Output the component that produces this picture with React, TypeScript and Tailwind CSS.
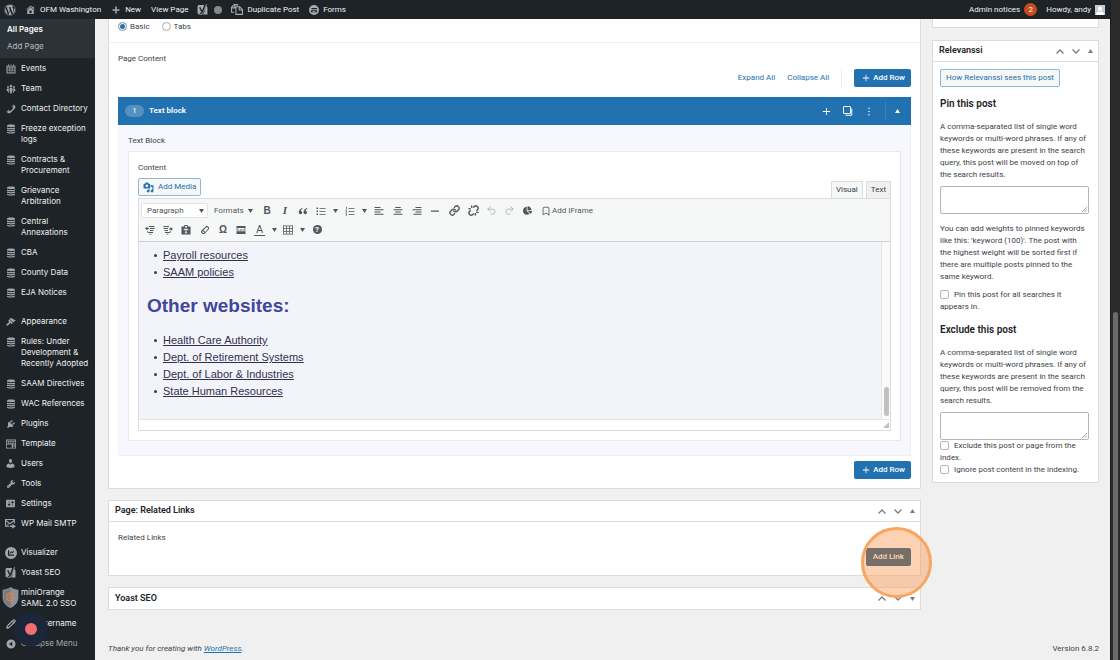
import type { ReactNode } from 'react';
import { FaWordpress, FaChartPie } from 'react-icons/fa';
import { Unlink, Link as LinkIcon, Bookmark, Undo2, Redo2, Pencil } from 'lucide-react';

const paths = {
    home: 'M16 8.5l1.53 1.53-1.06 1.06L10 4.6l-6.47 6.49-1.06-1.06L10 2.5l4 4v-2h2v4zm-6-2.46l6 5.99V18H4v-5.97zM12 17v-5H8v5h4z',
    plus: 'M11.5 3v5.5H17v3h-5.5V17h-3v-5.5H3v-3h5.5V3z',
    plusThin: 'M11 2v7h7v2h-7v7H9v-7H2V9h7V2z',
    calendar: 'M4 1h2v3H4zM9 1h2v3H9zM14 1h2v3h-2zM1 3h2v2h4V3h1v2h4V3h1v2h4V3h2v16H1zM3 7v2.5h3V7zm4 0v2.5h2.500V7zm3.500 0v2.500h2.500V7zM14 7v2.500h3V7zM3 10.500V13h3v-2.500zm4 0V13h2.500v-2.500zm3.500 0V13h2.500v-2.500zm3.500 0V13h3v-2.500zM3 14v3h3v-3zm4 0v3h2.500v-3zm3.500 0v3h2.500v-3zm3.500 0v3h3v-3z',
    team: 'M10 1.500a2.500 2.500 0 110 5 2.500 2.500 0 010-5zM4 4a2 2 0 110 4 2 2 0 010-4zM16 4a2 2 0 110 4 2 2 0 010-4zM7.500 7.500h5l1 6h-1.500l-.5 5.500h-3L8 13.500H6.500zM2 9h4l-1 5h1l.5 3H4l-.5-3H1zM14 9h4l1 5h-2.500l-.5 3h-2.500l.5-3h1z',
    phone: 'M12.06 6l-.21-.2c-.52-.54-.43-.79.08-1.3l2.72-2.75c.81-.82.96-1.21 1.73-.48l.21.2zm.53.45l4.4-4.4c.7.94 2.34 3.47 1.53 5.34-.73 1.67-1.09 1.75-2 3-1.85 2.11-4.18 4.37-6 6.07-1.26.91-1.31 1.33-3 2-1.8.71-4.4-.89-5.38-1.56l4.4-4.4 1.18 1.62c.34.46 1.2-.06 1.8-.66 1.04-1.05 3.18-3.18 4-4.07.59-.59 1.12-1.45.66-1.8zM1.57 16.5l-.21-.21c-.68-.74-.29-.9.52-1.7l2.74-2.72c.51-.49.75-.6 1.27-.11l.2.21z',
    stack: 'M2 3.500C2 2 5 1 10 1s8 1 8 2.500V5c-1 .8-4 1.300-8 1.300S3 5.800 2 5zM2 6.800c2 1 5 1.300 8 1.300s6-.3 8-1.300v2.500c-1 .8-4 1.300-8 1.300S3 10.100 2 9.300zM2 11.200c2 1 5 1.300 8 1.300s6-.3 8-1.300v2.500c-1 .8-4 1.300-8 1.300S3 14.500 2 13.700zM2 15.500c2 1 5 1.300 8 1.300s6-.3 8-1.300v1.500c0 1.300-3 2-8 2s-8-.7-8-2z',
    appearance: 'M14.48 11.06L7.41 3.99l1.5-1.5c.5-.56 2.3-.47 3.51.32 1.21.8 1.43 1.28 2.91 2.1 1.18.64 2.45 1.26 4.45.85zm-.71.71L6.7 4.7 4.93 6.47c-.39.39-.39 1.02 0 1.41l1.06 1.06c.39.39.39 1.03 0 1.42-.6.6-1.43 1.11-2.21 1.69-.35.26-.7.53-1.01.84C1.43 14.23.4 16.08 1.4 17.07c.99 1 2.84-.03 4.18-1.36.31-.31.58-.66.85-1.02.57-.78 1.08-1.61 1.69-2.21.39-.39 1.02-.39 1.41 0l1.06 1.06c.39.39 1.02.39 1.41 0z',
    plugins: 'M13.11 4.36L9.87 7.6 8 5.73l3.24-3.24c.35-.34 1.05-.2 1.56.32.52.51.66 1.21.31 1.55zm-8 1.77l.91-1.12 9.01 9.01-1.19.84c-.71.71-2.63 1.16-3.82 1.16H6.14L4.9 17.26c-.59.59-1.54.59-2.12 0-.59-.58-.59-1.53 0-2.12l1.24-1.24v-3.88c0-1.13.4-3.19 1.09-3.89zm7.26 3.97l3.24-3.24c.34-.35 1.04-.21 1.55.31.52.51.66 1.21.31 1.55l-3.24 3.25z',
    template: 'M0 1h20v18H0zM1.500 2.500v1h17v-1zM1.500 5v4h3V5zm4.500 0v4h3V5zm4.500 0v4h3V5zm4.500 0v4h3.500V5zM1.500 11v6.500h10V11zm12 0v2h5v-2zm0 4v2.500h5V15z',
    users: 'M10 9.25c-2.27 0-2.73-3.44-2.73-3.44C7 4.02 7.82 2 9.97 2c2.16 0 2.98 2.02 2.71 3.81 0 0-.41 3.44-2.68 3.44zm0 2.57L12.72 10c2.39 0 4.52 2.33 4.52 4.53v2.49s-3.65 1.13-7.24 1.13c-3.65 0-7.24-1.13-7.24-1.13v-2.49c0-2.25 1.94-4.48 4.47-4.48z',
    tools: 'M16.68 9.77c-1.34 1.34-3.3 1.67-4.95.99l-5.41 6.52c-.99.99-2.59.99-3.58 0s-.99-2.59 0-3.57l6.52-5.42c-.68-1.65-.35-3.61.99-4.95 1.28-1.28 3.12-1.62 4.72-1.06l-2.89 2.89 2.82 2.82 2.86-2.87c.53 1.58.18 3.39-1.08 4.65zM3.81 16.21c.4.39 1.04.39 1.43 0 .4-.4.4-1.04 0-1.43-.39-.4-1.03-.4-1.43 0-.39.39-.39 1.03 0 1.43z',
    settings: 'M18 16V4c0-.55-.45-1-1-1H3c-.55 0-1 .45-1 1v12c0 .55.45 1 1 1h14c.55 0 1-.45 1-1zM8 11h1c.55 0 1 .45 1 1s-.45 1-1 1H8v1.5c0 .28-.22.5-.5.5s-.5-.22-.5-.5V13H6c-.55 0-1-.45-1-1s.45-1 1-1h1V5.5c0-.28.22-.5.5-.5s.5.22.5.5V11zm5-2h-1c-.55 0-1-.45-1-1s.45-1 1-1h1V5.5c0-.28.22-.5.5-.5s.5.22.5.5V7h1c.55 0 1 .45 1 1s-.45 1-1 1h-1v5.5c0 .28-.22.5-.5.5s-.5-.22-.5-.5V9z',
    mail: 'M0 2h18v8h-2V6.500L9 12 2 6.500V14h6v2H0zM2 3.500l7 5.500 7-5.500zM2 14l4-4 1 .8L3.500 14zM13 11l7 4-7 4.500v-3H9v-3h4z',
    visualizer: 'M10 0a10 10 0 100 20 10 10 0 000-20zM5 5.500h2v7h8v2H5zm3 4L10.500 7l2 1.500L15 6v2L12.500 10.500l-2-1.500L8 11.500z',
    collapse: 'M10 1a9 9 0 100 18 9 9 0 000-18zm2.500 13.500L6 10l6.500-4.500z',
    media: 'M13 11V4c0-.55-.45-1-1-1h-1.67L9 1H5L3.67 3H2c-.55 0-1 .45-1 1v7c0 .55.45 1 1 1h10c.55 0 1-.45 1-1zM7 4.5c1.38 0 2.5 1.12 2.5 2.5S8.38 9.500 7 9.500 4.500 8.380 4.500 7 5.620 4.500 7 4.500zM14 6h5v10.500c0 1.380-1.120 2.500-2.500 2.500S14 17.880 14 16.500s1.120-2.500 2.500-2.500c.17 0 .34.02.5.05V9h-3V6zm-4 8.050V13h2v3.500c0 1.380-1.120 2.500-2.500 2.500S7 17.880 7 16.500 8.120 14 9.500 14c.17 0 .34.02.5.05z',
    forms: 'M10 0a10 10 0 100 20 10 10 0 000-20zM5 6v2.500h11V6zM4 10.500v4h12v-4zm3 1.500h6v1.500H7z',
    quote: 'M9 4C5 5 1.500 8 1.500 12.500c0 2.500 1.500 4 3.600 4 2 0 3.400-1.400 3.400-3.300S7.200 10 5.500 10C5.700 8 7 6.500 9 5.500zM18.500 4c-4 1-7.500 4-7.500 8.500 0 2.500 1.500 4 3.600 4 2 0 3.400-1.400 3.400-3.300S16.700 10 15 10c.2-2 1.500-3.500 3.500-4.500z',
    ul: 'M1 3h3v3H1zM7 4h12v1.500H7zM1 9h3v3H1zM7 9.800h12v1.500H7zM1 15h3v3H1zM7 15.800h12v1.500H7z',
    ol: 'M2 2h1.500v5H2zM7 4h12v1.500H7zM1 9h3v1.200L2.500 12H4v1H1v-1l1.500-2H1zM7 9.800h12v1.500H7zM1 14.500h3V19H1v-1h2v-.8H2v-1h1v-.7H1zM7 15.800h12v1.500H7z',
    left: 'M1 2h12v2.200H1zM1 6.500h18v2.200H1zM1 11h12v2.200H1zM1 15.500h18v2.200H1z',
    center: 'M4.500 2h11v2.200h-11zM1 6.500h18v2.200H1zM4.500 11h11v2.200h-11zM1 15.500h18v2.200H1z',
    right: 'M7 2h12v2.200H7zM1 6.500h18v2.200H1zM7 11h12v2.200H7zM3 15.500h16v2.200H3z',
    minus: 'M2 9h16v2.500H2z',
    eraser: 'M12.500 2h3L18 5v3L9 18H5L2 14.500V12zM12.800 4.500L7 10.500 10.500 14 16 7.500V5.500l-1-1zM5.500 12L4 13.700 6 16h2l1-1.200z',
    outdent: 'M8 2h11v2H8zM10 6h9v2h-9zM10 10h7v2h-7zM7 14h9v2H7zM0 7l5-4v2.800h3v2.400H5V11zM4 13h3v2H4zM9 17.500h4v1.500H9z',
    indent: 'M1 2h11v2H1zM1 6h9v2H1zM3 10h7v2H3zM4 14h9v2H4zM20 8l-5 4V9.200h-3V6.800h3V4zM13 13h3v2h-3zM7 17.500h4v1.500H7z',
    paste: 'M7 0h6l1 3h5v16H1V3h5zM8 2v3h4V2zM5.500 7.500v3H7V9.500h2V15H7.500v1.500h5V15H11V9.500h2v1h1.500v-3z',
    more: 'M1 2h18v5.500h-2V4H3v3.500H1zM3 4h14v2H3zM1 9h5v2H1zM7.500 9h5v2h-5zM14 9h5v2h-5zM1 12.500h18V18H1z',
    table: 'M0 1h20v18H0zM1.500 2.500v3.500h5V2.500zm6.500 0v3.500h4.500V2.500zm6 0v3.500h4.500V2.500zM1.500 7.500v4.500h5V7.500zm6.500 0v4.500h4.500V7.500zm6 0v4.500h4.500V7.500zM1.500 13.500v4h5v-4zm6.500 0v4h4.500v-4zm6 0v4h4.500v-4z',
};

type IconName = keyof typeof paths;

function Icon({ name, className = 'size-[10px]' }: { name: IconName; className?: string }) {
    return (
        <svg viewBox="0 0 20 20" fill="currentColor" fillRule="evenodd" className={`shrink-0 ${className}`} aria-hidden="true">
            <path d={paths[name]} />
        </svg>
    );
}

function YoastIcon({ className = 'size-[11px]' }: { className?: string }) {
    return (
        <svg viewBox="0 0 20 20" className={`shrink-0 ${className}`} fill="none" aria-hidden="true">
            <path d="M4 2h10l-5 17H4c-2 0-3-1-3-3V5c0-2 1-3 3-3zM16 4c2 0 3 1 3 3v12h-9c2-1 3-3 4-6z" fill="currentColor" />
            <path d="M5 6l3.500 7.500" stroke="#1d2327" strokeWidth="2.500" />
            <path d="M15 1l-5.500 13.500c-1 2-2 3-4.500 3" stroke="#1d2327" strokeWidth="2.500" />
            <path d="M17.500 0l-5 13.500c-1 3-3 5-6 5.500" stroke="currentColor" strokeWidth="1.500" />
        </svg>
    );
}

function ShieldIcon() {
    return (
        <svg viewBox="0 0 32 40" className="mt-[10px] h-[21px] w-[17px] shrink-0" aria-hidden="true">
            <path d="M16 0c5 4 10 5 15 5v15c0 9-6 16-15 20C7 36 1 29 1 20V5c5 0 10-1 15-5z" fill="#8d9297" />
            <path d="M16 2v36C8 34 3 28 3 20V7c5 0 9-2 13-5z" fill="#777c81" />
            <circle cx="16" cy="19" r="7.500" fill="none" stroke="#d9834a" strokeWidth="2.500" strokeDasharray="39 8" />
            <circle cx="16" cy="19" r="3" fill="none" stroke="#d9834a" strokeWidth="2" />
            <path d="M18 17l6-5" stroke="#d9834a" strokeWidth="2" />
        </svg>
    );
}

function Caret({ up = false, className = '' }: { up?: boolean; className?: string }) {
    return (
        <svg viewBox="0 0 10 8" className={`h-[4px] w-[5px] shrink-0 ${className}`} fill="currentColor" aria-hidden="true">
            <path d={up ? 'M5 0l5 8H0z' : 'M0 0h10L5 8z'} />
        </svg>
    );
}

function Chevron({ up = false }: { up?: boolean }) {
    return (
        <svg viewBox="0 0 16 10" className="h-[5px] w-[8px]" fill="none" stroke="currentColor" strokeWidth="2.500" aria-hidden="true">
            <path d={up ? 'M1 9l7-7 7 7' : 'M1 1l7 7 7-7'} />
        </svg>
    );
}

const menu: { label: string; icon: ReactNode; gap?: boolean; muted?: boolean }[] = [
    { label: 'Events', icon: <Icon name="calendar" /> },
    { label: 'Team', icon: <Icon name="team" /> },
    { label: 'Contact Directory', icon: <Icon name="phone" /> },
    { label: 'Freeze exception logs', icon: <Icon name="stack" /> },
    { label: 'Contracts & Procurement', icon: <Icon name="stack" /> },
    { label: 'Grievance Arbitration', icon: <Icon name="stack" /> },
    { label: 'Central\nAnnexations', icon: <Icon name="stack" /> },
    { label: 'CBA', icon: <Icon name="stack" /> },
    { label: 'County Data', icon: <Icon name="stack" /> },
    { label: 'EJA Notices', icon: <Icon name="stack" /> },
    { label: 'Appearance', icon: <Icon name="appearance" />, gap: true },
    { label: 'Rules: Under Development & Recently Adopted', icon: <Icon name="stack" /> },
    { label: 'SAAM Directives', icon: <Icon name="stack" /> },
    { label: 'WAC References', icon: <Icon name="stack" /> },
    { label: 'Plugins', icon: <Icon name="plugins" /> },
    { label: 'Template', icon: <Icon name="template" /> },
    { label: 'Users', icon: <Icon name="users" className="size-[11px]" /> },
    { label: 'Tools', icon: <Icon name="tools" /> },
    { label: 'Settings', icon: <Icon name="settings" className="size-[11px]" /> },
    { label: 'WP Mail SMTP', icon: <Icon name="mail" className="size-[11px]" /> },
    { label: 'Visualizer', icon: <Icon name="visualizer" className="size-[12px]" />, gap: true },
    { label: 'Yoast SEO', icon: <YoastIcon /> },
    { label: 'miniOrange\nSAML 2.0 SSO', icon: <ShieldIcon /> },
    { label: 'Edit Username', icon: <Pencil size={10} strokeWidth={3} /> },
    { label: 'Collapse Menu', icon: <Icon name="collapse" />, muted: true },
];

function AdminBar() {
    return (
        <header className="flex h-[19px] items-center bg-[#1d2327] pl-1 pr-[5px] text-[8px] text-[#f0f0f1]">
            <FaWordpress size={12} className="text-[#a7aaad]" />
            <a href="#" className="ml-[9px] flex items-center gap-1">
                <Icon name="home" className="size-[11px] text-[#a7aaad]" />
                OFM Washington
            </a>
            <a href="#" className="ml-[10px] flex items-center gap-1">
                <Icon name="plus" className="size-[10px] text-[#a7aaad]" />
                New
            </a>
            <a href="#" className="ml-[10px]">View Page</a>
            <YoastIcon className="ml-[9px] size-[11px] text-[#a7aaad]" />
            <span className="ml-[6px] size-[8px] rounded-full bg-[#888]" />
            <a href="#" className="ml-[9px] flex items-center gap-1">
                <svg viewBox="0 0 22 20" className="h-[11px] w-[12px] text-[#a7aaad]" fill="none" stroke="currentColor" strokeWidth="2" aria-hidden="true">
                    <path d="M9 5h7l5 5v9H9zM15 5v6h6M6 15H1V6l5-5h6v2M7 1v6H1" />
                </svg>
                Duplicate Post
            </a>
            <a href="#" className="ml-[10px] flex items-center gap-1">
                <Icon name="forms" className="size-[10px] text-[#a7aaad]" />
                Forms
            </a>
            <a href="#" className="ml-auto flex items-center gap-1">
                Admin notices
                <span className="flex size-[13px] items-center justify-center rounded-full bg-[#ca4a1f] text-white">2</span>
            </a>
            <a href="#" className="ml-[9px] flex items-center gap-1">
                Howdy, andy
                <svg viewBox="0 0 20 20" className="size-[10px] bg-[#c9c9c9]" fill="#fff" aria-hidden="true">
                    <path d="M10 3a4 4.500 0 110 9 4 4.500 0 010-9zM2 20c0-5 3-7 5-7l3 1 3-1c2 0 5 2 5 7z" />
                </svg>
            </a>
        </header>
    );
}

function Sidebar() {
    return (
        <nav className="relative w-[95px] shrink-0 bg-[#1d2327] font-['Inter',sans-serif] text-[8px] leading-[11px] text-[#f0f0f1]">
            <div className="flex h-[39px] flex-col gap-[6px] bg-[#2c3338] px-[7px] pt-[5px]">
                <a href="#" className="font-semibold text-white">All Pages</a>
                <a href="#" className="text-[#b4b9be]">Add Page</a>
            </div>
            <ul>
                {menu.map((item) => (
                    <li key={item.label} className={item.gap ? 'mt-[9px]' : ''}>
                        <a href="#" className={`flex pb-1 pt-[5px] ${item.muted ? 'text-[#a7aaad]' : ''}`}>
                            <span className="flex h-[11px] w-[21px] shrink-0 items-center justify-center text-[#a0a5aa]">
                                {item.icon}
                            </span>
                            <span className="whitespace-pre-line">{item.label}</span>
                        </a>
                    </li>
                ))}
            </ul>
            <div className="absolute bottom-[14px] left-[14px] flex size-[34px] items-center justify-center rounded-full bg-[#1b2639]">
                <span className="size-[12px] rounded-full bg-[#f36f6f]" />
            </div>
        </nav>
    );
}

function PanelHeader({ title, closed = false }: { title: string; closed?: boolean }) {
    return (
        <div className={`flex h-[21px] items-center pl-[6px] pr-[5px] ${closed ? '' : 'border-b border-[#dcdcde]'}`}>
            <h2 className="flex-1 text-[9px] font-semibold text-[#1d2327]">{title}</h2>
            <div className="flex items-center gap-[8px] text-[#787c82]">
                <button aria-label="Move up"><Chevron up /></button>
                <button aria-label="Move down"><Chevron /></button>
                <button aria-label="Toggle panel"><Caret up={!closed} /></button>
            </div>
        </div>
    );
}

function AddRow() {
    return (
        <button className="flex h-[18px] items-center gap-[3px] rounded-[2px] bg-[#2271b1] pl-[8px] pr-[6px] text-[8px] font-medium text-white">
            <Icon name="plusThin" className="size-[8px]" />
            Add Row
        </button>
    );
}

function Tool({ label, caret = false, children }: { label: string; caret?: boolean; children: ReactNode }) {
    return (
        <button aria-label={label} className={`flex h-[16px] shrink-0 items-center ${caret ? 'w-[29px] justify-start gap-[7px] pl-1' : 'w-[18px] justify-center'}`}>
            {children}
            {caret && <Caret />}
        </button>
    );
}

function Toolbar() {
    return (
        <div className="border-b border-[#d0d1d4] bg-[#f6f7f7] px-[2px] py-[3px] text-[#50575e]">
            <div className="flex h-[17px] items-center">
                <div className="relative mr-[6px] flex h-[15px] items-center">
                    <select aria-label="Block format" className="h-[15px] w-[67px] appearance-none rounded-[1px] border border-[#e2e4e7] bg-white px-[5px] text-[8px] leading-none">
                        <option>Paragraph</option>
                    </select>
                    <Caret className="pointer-events-none absolute right-[4px]" />
                </div>
                <button className="flex w-[44px] items-center gap-1 text-[8px]">Formats <Caret /></button>
                <Tool label="Bold"><span className="font-['Liberation_Sans'] text-[10px] font-bold">B</span></Tool>
                <Tool label="Italic"><span className="font-['Liberation_Serif'] text-[11px] font-bold italic">I</span></Tool>
                <Tool label="Quote"><Icon name="quote" /></Tool>
                <Tool label="Bulleted list" caret><Icon name="ul" /></Tool>
                <Tool label="Numbered list" caret><Icon name="ol" /></Tool>
                <div className="flex gap-px">
                    <Tool label="Align left"><Icon name="left" /></Tool>
                    <Tool label="Align center"><Icon name="center" /></Tool>
                    <Tool label="Align right"><Icon name="right" /></Tool>
                </div>
                <div className="flex gap-px">
                    <Tool label="Horizontal line"><Icon name="minus" /></Tool>
                    <Tool label="Insert link"><LinkIcon size={11} strokeWidth={3} /></Tool>
                    <Tool label="Remove link"><Unlink size={11} strokeWidth={3} /></Tool>
                </div>
                <Tool label="Undo"><Undo2 size={11} className="text-[#b0b3b6]" /></Tool>
                <Tool label="Redo"><Redo2 size={11} className="text-[#b0b3b6]" /></Tool>
                <Tool label="Visualizer"><FaChartPie size={9} /></Tool>
                <button className="ml-[5px] flex items-center gap-px text-[8px]">
                    <Bookmark size={10} />
                    Add IFrame
                </button>
            </div>
            <div className="mt-[2px] flex h-[17px] items-center">
                <Tool label="Decrease indent"><Icon name="outdent" /></Tool>
                <Tool label="Increase indent"><Icon name="indent" /></Tool>
                <div className="flex gap-px">
                    <Tool label="Paste as text"><Icon name="paste" /></Tool>
                    <Tool label="Clear formatting"><Icon name="eraser" /></Tool>
                </div>
                <Tool label="Special character"><span className="font-['Liberation_Sans'] text-[10px] font-bold">Ω</span></Tool>
                <Tool label="Read more"><Icon name="more" /></Tool>
                <Tool label="Text color" caret>
                    <span className="h-[12px] w-[11px] border-b border-current text-center font-['Liberation_Sans'] text-[10px] leading-[11px]">A</span>
                </Tool>
                <Tool label="Table" caret><Icon name="table" /></Tool>
                <Tool label="Help">
                    <span className="flex size-[9px] items-center justify-center rounded-full bg-[#50575e] text-[8px] font-bold leading-none text-white">?</span>
                </Tool>
            </div>
        </div>
    );
}

function EditorLinks({ items }: { items: string[] }) {
    return (
        <ul className="pl-[7px] leading-[17px]">
            {items.map((item) => (
                <li key={item} className="flex items-center gap-[6px]">
                    <span className="size-[3px] rounded-full bg-[#3b3b4d]" />
                    <a href="#" className="underline">{item}</a>
                </li>
            ))}
        </ul>
    );
}

function Editor() {
    return (
        <div className="border border-[#dcdcde]">
            <Toolbar />
            <div className="flex h-[177px]">
                <div className="flex-1 bg-[#f3f4f9] px-[8px] pt-[5px] font-['Liberation_Sans',sans-serif] text-[11px] text-[#33304f]">
                    <EditorLinks items={['Payroll resources', 'SAAM policies']} />
                    <h1 className="mb-[13px] mt-[12px] text-[19px] font-bold leading-[26px] text-[#3f4799]">Other websites:</h1>
                    <EditorLinks items={['Health Care Authority', 'Dept. of Retirement Systems', 'Dept. of Labor & Industries', 'State Human Resources']} />
                </div>
                <div className="flex w-[9px] items-end justify-center border-l border-[#e8e8e8] bg-[#fafafa] pb-[3px]">
                    <span className="h-[29px] w-[5px] rounded-full bg-[#c1c1c1]" />
                </div>
            </div>
            <div className="flex h-[11px] items-center justify-end border-t border-[#e4e5e8] bg-white pr-px">
                <svg viewBox="0 0 6 6" className="size-[6px]" fill="#c0c0c0" aria-hidden="true"><path d="M6 0v6H0z" /></svg>
            </div>
        </div>
    );
}

function ContentPanel() {
    return (
        <section className="border border-t-0 border-[#dcdcde] bg-white">
            <div className="flex h-[24px] items-start gap-[12px] border-b border-[#f0f0f1] px-[9px] pt-[2px] text-[8px] leading-[11px]">
                <label className="flex items-center gap-[3px]">
                    <input type="radio" name="layout" defaultChecked className="size-[9px] appearance-none rounded-full border border-[#a9abaf] bg-white checked:bg-[#2271b1] checked:shadow-[inset_0_0_0_1px_#fff]" />
                    Basic
                </label>
                <label className="flex items-center gap-[3px]">
                    <input type="radio" name="layout" className="size-[9px] appearance-none rounded-full border border-[#a9abaf] bg-white" />
                    Tabs
                </label>
            </div>
            <div className="px-[9px] pb-[9px] pt-[10px]">
                <h3 className="text-[8px] leading-[11px]">Page Content</h3>
                <div className="mb-[10px] mt-[5px] flex h-[18px] items-center justify-end text-[8px] text-[#2271b1]">
                    <a href="#">Expand All</a>
                    <a href="#" className="ml-[12px]">Collapse All</a>
                    <span className="mx-[12px] h-[18px] w-px bg-[#ececee]" />
                    <AddRow />
                </div>

                <div className="flex h-[28px] items-center bg-[#2271b1] pl-[7px] pr-[11px] text-white">
                    <span className="flex h-[12px] w-[19px] items-center justify-center rounded-full bg-[#5590c2] text-[8px]">1</span>
                    <h4 className="ml-[5px] flex-1 text-[8px] font-semibold">Text block</h4>
                    <button aria-label="Add row"><Icon name="plusThin" className="size-[9px]" /></button>
                    <button aria-label="Duplicate row" className="ml-[12px]">
                        <svg viewBox="0 0 20 20" className="size-[10px]" fill="none" stroke="currentColor" strokeWidth="2" aria-hidden="true">
                            <rect x="1" y="1" width="14" height="14" rx="1" />
                            <path d="M5 18.500h12.500V5" strokeWidth="2" />
                        </svg>
                    </button>
                    <button aria-label="More actions" className="ml-[14px]">
                        <svg viewBox="0 0 4 20" className="h-[9px] w-[4px]" fill="currentColor" aria-hidden="true">
                            <circle cx="2" cy="3" r="1.700" /><circle cx="2" cy="10" r="1.700" /><circle cx="2" cy="17" r="1.700" />
                        </svg>
                    </button>
                    <span className="ml-[14px] mr-[9px] h-[18px] w-px bg-[#3c82ba]" />
                    <button aria-label="Collapse row"><Caret up /></button>
                </div>

                <div className="border border-t-0 border-[#f0f1f5] bg-[#f7f8fd] px-[9px] pb-[14px] pt-[10px]">
                    <h5 className="text-[8px] leading-[11px]">Text Block</h5>
                    <div className="mt-[5px] border border-[#e6e8ee] bg-white px-[9px] pb-[9px] pt-[10px]">
                        <h6 className="text-[8px] leading-[11px]">Content</h6>
                        <div className="flex items-end justify-between">
                            <button className="mb-[2px] mt-[5px] flex h-[18px] items-center gap-[4px] rounded-[2px] border border-[#8fb8d8] bg-[#f6f7f7] px-1 text-[8px] text-[#2271b1]">
                                <Icon name="media" className="size-[11px]" />
                                Add Media
                            </button>
                            <div className="flex gap-[3px] text-[8px]">
                                <button className="h-[17px] border border-b-0 border-[#dcdcde] bg-[#f6f7f7] px-1">Visual</button>
                                <button className="h-[17px] border border-b-0 border-[#dcdcde] bg-[#f0f0f1] px-1">Text</button>
                            </div>
                        </div>
                        <Editor />
                    </div>
                </div>
                <div className="mt-[5px] flex justify-end">
                    <AddRow />
                </div>
            </div>
        </section>
    );
}

function RelatedLinks() {
    return (
        <section className="mt-[11px] border border-[#dcdcde] bg-white">
            <PanelHeader title="Page: Related Links" />
            <div className="px-[9px] pb-[9px] pt-[10px]">
                <h3 className="text-[8px] leading-[11px]">Related Links</h3>
                <div className="mt-[5px] flex justify-end">
                    <div className="relative flex">
                        <button className="h-[18px] rounded-[2px] bg-[#0a4b78] px-[7px] text-[8px] font-medium text-white">Add Link</button>
                        <span className="pointer-events-none absolute -right-[21px] -top-[21px] z-10 size-[71px] rounded-full border-3 border-[#f8a560] bg-[#fa9c55]/45" />
                    </div>
                </div>
            </div>
        </section>
    );
}

function Textarea({ label }: { label: string }) {
    return (
        <div className="relative h-[28px]">
            <textarea aria-label={label} className="block h-full w-full resize-none rounded-[2px] border border-[#b4b6ba] bg-white" />
            <svg viewBox="0 0 6 6" className="absolute bottom-[2px] right-[2px] size-[5px]" stroke="#777" strokeWidth="0.800" aria-hidden="true">
                <path d="M0 6l6-6M3 6l3-3" />
            </svg>
        </div>
    );
}

function Check({ children }: { children: string }) {
    return (
        <label className="block">
            <input type="checkbox" className="mr-[5px] size-[9px] appearance-none rounded-[2px] border border-[#b4b6ba] bg-white align-middle" />
            {children}
        </label>
    );
}

function Relevanssi() {
    return (
        <aside className="w-[167px] shrink-0">
            <div className="h-[9px] border border-t-0 border-[#dcdcde] bg-white" />
            <section className="mt-[12px] border border-[#dcdcde] bg-white">
                <PanelHeader title="Relevanssi" />
                <div className="pb-[6px] pl-[7px] pr-[9px] pt-[7px] text-[8px] leading-[12px]">
                    <button className="h-[18px] rounded-[2px] border border-[#8fb8d8] bg-[#f6f7f7] px-[5px] leading-none text-[#2271b1]">How Relevanssi sees this post</button>
                    <h3 className="my-[11px] text-[10px] font-semibold text-[#1d2327]">Pin this post</h3>
                    <p className="mb-[5px]">A comma-separated list of single word keywords or multi-word phrases. If any of these keywords are present in the search query, this post will be moved on top of the search results.</p>
                    <Textarea label="Pinned keywords" />
                    <p className="mb-[6px] mt-[9px]">You can add weights to pinned keywords like this: 'keyword (100)'. The post with the highest weight will be sorted first if there are multiple posts pinned to the same keyword.</p>
                    <Check>Pin this post for all searches it appears in.</Check>
                    <h3 className="my-[11px] text-[10px] font-semibold text-[#1d2327]">Exclude this post</h3>
                    <p className="mb-[5px]">A comma-separated list of single word keywords or multi-word phrases. If any of these keywords are present in the search query, this post will be removed from the search results.</p>
                    <Textarea label="Excluded keywords" />
                    <Check>Exclude this post or page from the index.</Check>
                    <Check>Ignore post content in the indexing.</Check>
                </div>
            </section>
        </aside>
    );
}

export default function App() {
    return (
        <div className="flex h-screen overflow-hidden bg-[#f0f0f1] font-['Roboto',sans-serif] text-[#3c434a]">
            <div className="flex min-w-0 flex-1 flex-col">
                <AdminBar />
                <div className="flex flex-1">
                    <Sidebar />
                    <div className="flex min-w-0 flex-1 flex-col pl-[13px] pr-[11px]">
                        <div className="flex items-start gap-[11px]">
                            <main className="min-w-0 flex-1">
                                <ContentPanel />
                                <RelatedLinks />
                                <section className="mt-[11px] border border-[#dcdcde] bg-white">
                                    <PanelHeader title="Yoast SEO" closed />
                                </section>
                            </main>
                            <Relevanssi />
                        </div>
                        <footer className="mt-auto flex justify-between pb-[6px] text-[8px] leading-[11px]">
                            <p className="italic">Thank you for creating with <a href="#" className="text-[#2271b1] underline">WordPress</a>.</p>
                            <p>Version 6.8.2</p>
                        </footer>
                    </div>
                </div>
            </div>
            <div className="flex w-[10px] shrink-0 flex-col items-center border-l border-[#1c1c1c] bg-[#2b2b2b]">
                <span className="mt-[312px] w-[5px] flex-1 rounded-t-full bg-[#6b6b6b]" />
            </div>
        </div>
    );
}
